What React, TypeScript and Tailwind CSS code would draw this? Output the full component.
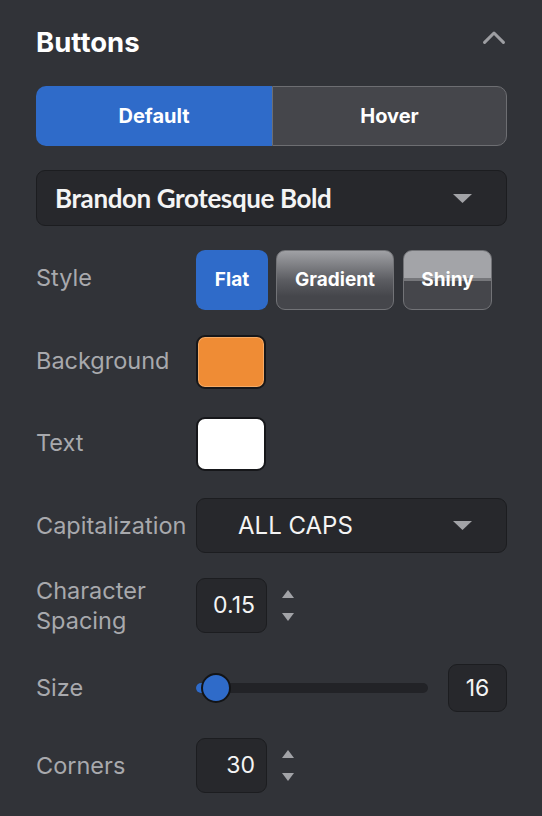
import React from "react";

const Tri = ({ up = false, w = 19, h = 9 }: { up?: boolean; w?: number; h?: number }) => (
  <svg width={w} height={h} viewBox={`0 0 ${w} ${h}`} className="block">
    {up ? (
      <polygon points={`0,${h} ${w / 2},0 ${w},${h}`} fill="#a2a3a7" />
    ) : (
      <polygon points={`0,0 ${w},0 ${w / 2},${h}`} fill="#a2a3a7" />
    )}
  </svg>
);

const Stepper = () => (
  <div className="ml-[15px] flex flex-col gap-[15px]">
    <Tri up w={12} h={8} />
    <Tri w={12} h={8} />
  </div>
);

const Label = ({ children, cls = "" }: { children: React.ReactNode; cls?: string }) => (
  <div className={`w-[160px] shrink-0 text-[23.5px] text-[#a8a9ad] ${cls}`}>{children}</div>
);

export default function App() {
  return (
    <div
      className="w-[542px] min-h-[816px] bg-[#313338] pl-[36px] pr-[35px] pt-[26px]"
      style={{ fontFamily: "Inter, 'Noto Sans', sans-serif" }}
    >
      {/* Title */}
      <div className="flex h-[32px] justify-between">
        <div className="text-[27.5px] font-bold leading-[32px] text-white">Buttons</div>
        <svg width="22" height="13" viewBox="0 0 22 13" className="mr-[2px] mt-[5px] block">
          <polyline
            points="1.6,11.4 11,2 20.4,11.4"
            fill="none"
            stroke="#9d9ea2"
            strokeWidth="3"
            strokeLinecap="round"
            strokeLinejoin="round"
          />
        </svg>
      </div>

      {/* Tabs */}
      <div className="mt-[28px] flex h-[60px]">
        <div className="flex w-[236px] items-center justify-center rounded-l-[10px] bg-[#2f6bc9] text-[20px] font-bold text-white">
          Default
        </div>
        <div className="flex flex-1 items-center justify-center rounded-r-[10px] border-[1.5px] border-[#6d6e72] bg-[#45464b] text-[20px] font-bold text-white">
          Hover
        </div>
      </div>

      {/* Font dropdown */}
      <div className="mt-[24px] flex h-[56px] items-center justify-between rounded-[9px] border-[1.5px] border-[#1c1d20] bg-[#27282c] pl-[18px] pr-[34px]">
        <span
          className="text-[26px] font-bold tracking-[-0.4px] text-[#f4f4f4]"
          style={{ fontFamily: "Lato, 'Noto Sans', sans-serif" }}
        >
          Brandon Grotesque Bold
        </span>
        <Tri />
      </div>

      {/* Style */}
      <div className="mt-[24px] flex h-[60px] items-center">
        <Label cls="pb-[5px]">Style</Label>
        <div className="flex h-full">
          <div className="flex w-[72px] items-center justify-center rounded-[9px] bg-[#2f6bc9] text-[19px] font-bold text-white">
            Flat
          </div>
          <div className="ml-[8px] flex w-[118px] items-center justify-center rounded-[9px] border-[1.5px] border-[#727377] bg-[linear-gradient(to_bottom,#a0a1a5_0%,#5c5d62_50%,#45464b_78%)] text-[19px] font-bold text-white">
            Gradient
          </div>
          <div className="ml-[9px] flex w-[89px] items-center justify-center rounded-[9px] border-[1.5px] border-[#727377] bg-[linear-gradient(to_bottom,#a3a4a8_0%,#a3a4a8_47%,#76777b_47%,#76777b_51%,#45464b_51%,#45464b_100%)] text-[19px] font-bold text-white">
            Shiny
          </div>
        </div>
      </div>

      {/* Background */}
      <div className="mt-[25px] flex h-[54px] items-center">
        <Label cls="pb-[3px]">Background</Label>
        <div className="h-[54px] w-[70px] rounded-[9px] border-2 border-[#16171a] bg-[#ef8c35] shadow-[inset_0_0_0_1px_#f6ab66]" />
      </div>

      {/* Text */}
      <div className="mt-[28px] flex h-[54px] items-center">
        <Label cls="pb-[3px]">Text</Label>
        <div className="h-[54px] w-[70px] rounded-[9px] border-2 border-[#16171a] bg-white" />
      </div>

      {/* Capitalization */}
      <div className="mt-[27px] flex h-[55px] items-center">
        <Label>Capitalization</Label>
        <div className="flex h-full flex-1 items-center justify-between rounded-[9px] border-[1.5px] border-[#1c1d20] bg-[#27282c] pl-[41px] pr-[34px]">
          <span className="text-[24px] text-[#f4f4f4]">ALL CAPS</span>
          <Tri />
        </div>
      </div>

      {/* Character Spacing */}
      <div className="mt-[25px] flex h-[55px] items-center">
        <Label cls="leading-[30px]">
          Character
          <br />
          Spacing
        </Label>
        <div className="flex h-full w-[71px] items-center justify-end rounded-[9px] border-[1.5px] border-[#1c1d20] bg-[#27282c] pr-[11px] text-[23px] text-[#f4f4f4]">
          0.15
        </div>
        <Stepper />
      </div>

      {/* Size */}
      <div className="mt-[31px] flex h-[48px] items-center">
        <Label>Size</Label>
        <div className="relative flex h-[30px] flex-1 items-center">
          <div className="h-[10px] w-full rounded-full bg-[#222327]" />
          <div className="absolute left-0 top-1/2 h-[10px] w-[12px] -translate-y-1/2 rounded-l-full bg-[#2f6bc9]" />
          <div className="absolute left-[5px] top-0 h-[30px] w-[30px] rounded-full border-2 border-[#131416] bg-[#2f6bc9]" />
        </div>
        <div className="ml-[20px] flex h-full w-[59px] items-center justify-center rounded-[9px] border-[1.5px] border-[#1c1d20] bg-[#27282c] text-[23px] text-[#f4f4f4]">
          16
        </div>
      </div>

      {/* Corners */}
      <div className="mt-[26px] flex h-[55px] items-center">
        <Label>Corners</Label>
        <div className="flex h-full w-[71px] items-center justify-end rounded-[9px] border-[1.5px] border-[#1c1d20] bg-[#27282c] pr-[11px] text-[23px] text-[#f4f4f4]">
          30
        </div>
        <Stepper />
      </div>
    </div>
  );
}
